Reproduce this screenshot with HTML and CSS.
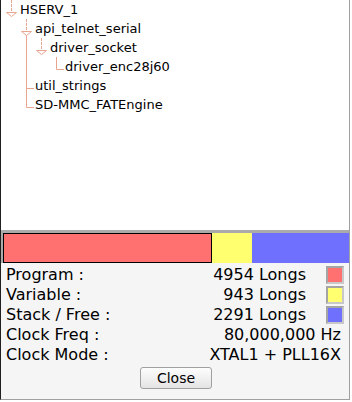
FILE: index.html
```html
<!DOCTYPE html>
<html>
<head>
<meta charset="utf-8">
<link rel="stylesheet" href="styles.css">
</head>
<body>
<div class="window">
  <div class="tree">
    <div class="row">
      <svg class="cell" viewBox="0 0 15 19"><line class="stem" x1="6.5" y1="0" x2="6.5" y2="11"/><polygon points="1.5,12.5 11.5,12.5 6.5,16.5"/></svg>
      <span class="label">HSERV_1</span>
    </div>
    <div class="row">
      <span class="cell"></span>
      <svg class="cell" viewBox="0 0 15 19"><line class="stem" x1="6.5" y1="0" x2="6.5" y2="11"/><polygon points="1.5,12.5 11.5,12.5 6.5,16.5"/><line x1="6.5" y1="16.5" x2="6.5" y2="19"/></svg>
      <span class="label">api_telnet_serial</span>
    </div>
    <div class="row">
      <span class="cell"></span>
      <svg class="cell" viewBox="0 0 15 19"><line x1="6.5" y1="0" x2="6.5" y2="19"/></svg>
      <svg class="cell" viewBox="0 0 15 19"><line class="stem" x1="6.5" y1="0" x2="6.5" y2="11"/><polygon points="1.5,12.5 11.5,12.5 6.5,16.5"/></svg>
      <span class="label">driver_socket</span>
    </div>
    <div class="row">
      <span class="cell"></span>
      <svg class="cell" viewBox="0 0 15 19"><line x1="6.5" y1="0" x2="6.5" y2="19"/></svg>
      <span class="cell"></span>
      <svg class="cell" viewBox="0 0 15 19"><polyline points="6.5,0 6.5,12.5 14,12.5"/></svg>
      <span class="label">driver_enc28j60</span>
    </div>
    <div class="row">
      <span class="cell"></span>
      <svg class="cell" viewBox="0 0 15 19"><line x1="6.5" y1="0" x2="6.5" y2="19"/><line x1="6.5" y1="12.5" x2="14" y2="12.5"/></svg>
      <span class="label">util_strings</span>
    </div>
    <div class="row">
      <span class="cell"></span>
      <svg class="cell" viewBox="0 0 15 19"><polyline points="6.5,0 6.5,12.5 14,12.5"/></svg>
      <span class="label">SD-MMC_FATEngine</span>
    </div>
  </div>
  <div class="meter">
    <div class="seg seg-prog" style="width:60.5%"></div>
    <div class="seg seg-var" style="width:11.52%"></div>
    <div class="seg seg-free" style="width:27.98%"></div>
  </div>
  <div class="panel">
    <div class="info">
      <span class="key">Program :</span>
      <span class="val">4954 Longs</span>
      <span class="swatch sw-prog"></span>
    </div>
    <div class="info">
      <span class="key">Variable :</span>
      <span class="val">943 Longs</span>
      <span class="swatch sw-var"></span>
    </div>
    <div class="info">
      <span class="key">Stack / Free :</span>
      <span class="val">2291 Longs</span>
      <span class="swatch sw-free"></span>
    </div>
    <div class="info">
      <span class="key">Clock Freq :</span>
      <span class="val val-wide">80,000,000 Hz</span>
    </div>
    <div class="info">
      <span class="key">Clock Mode :</span>
      <span class="val val-wide">XTAL1 + PLL16X</span>
    </div>
    <div class="actions">
      <button class="btn">Close</button>
    </div>
  </div>
</div>
</body>
</html>
```
FILE: styles.css
```css
html, body {
  margin: 0;
  padding: 0;
  background: #ffffff;
}
body {
  font-family: "DejaVu Sans", sans-serif;
  font-size: 13px;
  color: #000;
}
.window {
  width: 350px;
  height: 400px;
  box-sizing: border-box;
  border-left: 1px solid #202020;
  border-right: 1px solid #a0a0a0;
  border-bottom: 1px solid #a0a0a0;
  display: flex;
  flex-direction: column;
  background: #f5f5f5;
}
.tree {
  height: 230px;
  background: #fff;
  padding-left: 4px;
  box-sizing: border-box;
}
.row {
  display: flex;
  height: 19px;
  line-height: 19px;
  white-space: nowrap;
}
.cell {
  display: block;
  width: 15px;
  height: 19px;
  flex: none;
}
svg.cell line, svg.cell polyline, svg.cell polygon {
  stroke: #e8a58f;
  stroke-width: 1;
  fill: none;
}
svg.cell .stem {
  stroke-dasharray: 3 1;
}
.meter {
  display: flex;
  height: 30px;
  border-top: 3px solid #ababab;
  border-left: 2px solid #ababab;
  background: #fff;
}
.seg {
  height: 100%;
  box-sizing: border-box;
}
.seg-prog {
  background: #ff7070;
  border: 1px solid #000;
}
.seg-var {
  background: #ffff70;
}
.seg-free {
  background: #7070ff;
}
.panel {
  flex: 1;
  background: #f5f5f5;
  padding: 2px 5px 0 5px;
}
.info {
  display: flex;
  align-items: center;
  height: 20px;
  line-height: 20px;
  font-size: 16px;
}
.key {
  flex: none;
}
.val {
  flex: 1;
  text-align: right;
}
.val-wide {
  padding-right: 3px;
}
.swatch {
  width: 18px;
  height: 18px;
  box-sizing: border-box;
  margin-left: 20px;
  border: 2px solid #a4a4a4;
  border-bottom-color: #c8c8c8;
  border-right-color: #c8c8c8;
}
.sw-prog { background: #ff7070; }
.sw-var { background: #ffff70; }
.sw-free { background: #7070ff; }
.actions {
  display: flex;
  justify-content: center;
  margin-top: 2px;
}
.btn {
  width: 72px;
  height: 22px;
  font-family: "DejaVu Sans", sans-serif;
  font-size: 14px;
  color: #000;
  border: 1px solid #a0a0a0;
  border-radius: 3px;
  background: linear-gradient(#fdfdfd, #e4e4e4);
  padding: 0;
  margin-left: 2px;
}
```
